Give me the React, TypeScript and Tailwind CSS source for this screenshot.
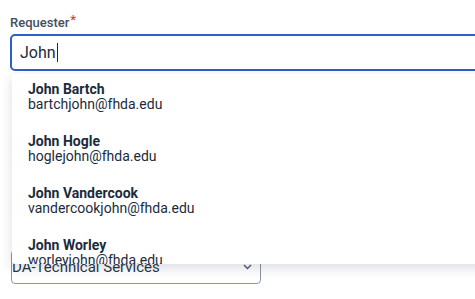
import React from "react";

const people = [
  { name: "John Bartch", email: "bartchjohn@fhda.edu" },
  { name: "John Hogle", email: "hoglejohn@fhda.edu" },
  { name: "John Vandercook", email: "vandercookjohn@fhda.edu" },
  { name: "John Worley", email: "worleyjohn@fhda.edu" },
];

const App = () => {
  return (
    <div className="w-[475px] h-[299px] overflow-hidden bg-white px-[10px] pt-[15px] font-['Roboto',sans-serif]">
      {/* requester field */}
      <label className="block text-[13px] leading-[16px] font-medium text-[#454f5b]">
        Requester
        <span className="text-[#d63e3e] relative -top-[3px] ml-[1px]">*</span>
      </label>
      <div className="relative mt-[3px] w-[600px]">
        <div className="h-[37px] border-2 border-[#2d5fc6] rounded-[5px] flex items-center pl-[8px]">
          <span className="text-[16px] leading-[20px] text-[#1b2b3c]">John</span>
          <span className="w-px h-[19px] bg-[#1b2b3c] ml-[1px]" />
        </div>

        {/* suggestions */}
        <ul className="absolute left-[2px] top-[calc(100%+3px)] w-[600px] max-h-[190px] overflow-hidden bg-white rounded-[3px] shadow-[0_4px_12px_rgba(30,40,60,0.16)] z-10">
          {people.map((p) => (
            <li key={p.email} className="pl-[16px] pt-[7px] pb-[14px] h-[52px]">
              <div className="text-[14px] leading-[16px] font-bold text-[#1b2b3c]">{p.name}</div>
              <div className="text-[14px] leading-[15px] text-[#1b2b3c]">{p.email}</div>
            </li>
          ))}
        </ul>
      </div>

      {/* department select, mostly hidden under the list */}
      <div className="mt-[179px] ml-[1px] w-[250px] h-[34px] border border-[#8b95a1] rounded-[4px] flex items-center justify-between pr-[8px]">
        <span className="text-[15px] leading-[20px] text-[#2a3542]">DA-Technical Services</span>
        <svg width="9" height="6" viewBox="0 0 9 6" fill="none">
          <path d="M1 1l3.5 3.5L8 1" stroke="#4a5a78" strokeWidth="1.4" />
        </svg>
      </div>
    </div>
  );
};

export default App;
